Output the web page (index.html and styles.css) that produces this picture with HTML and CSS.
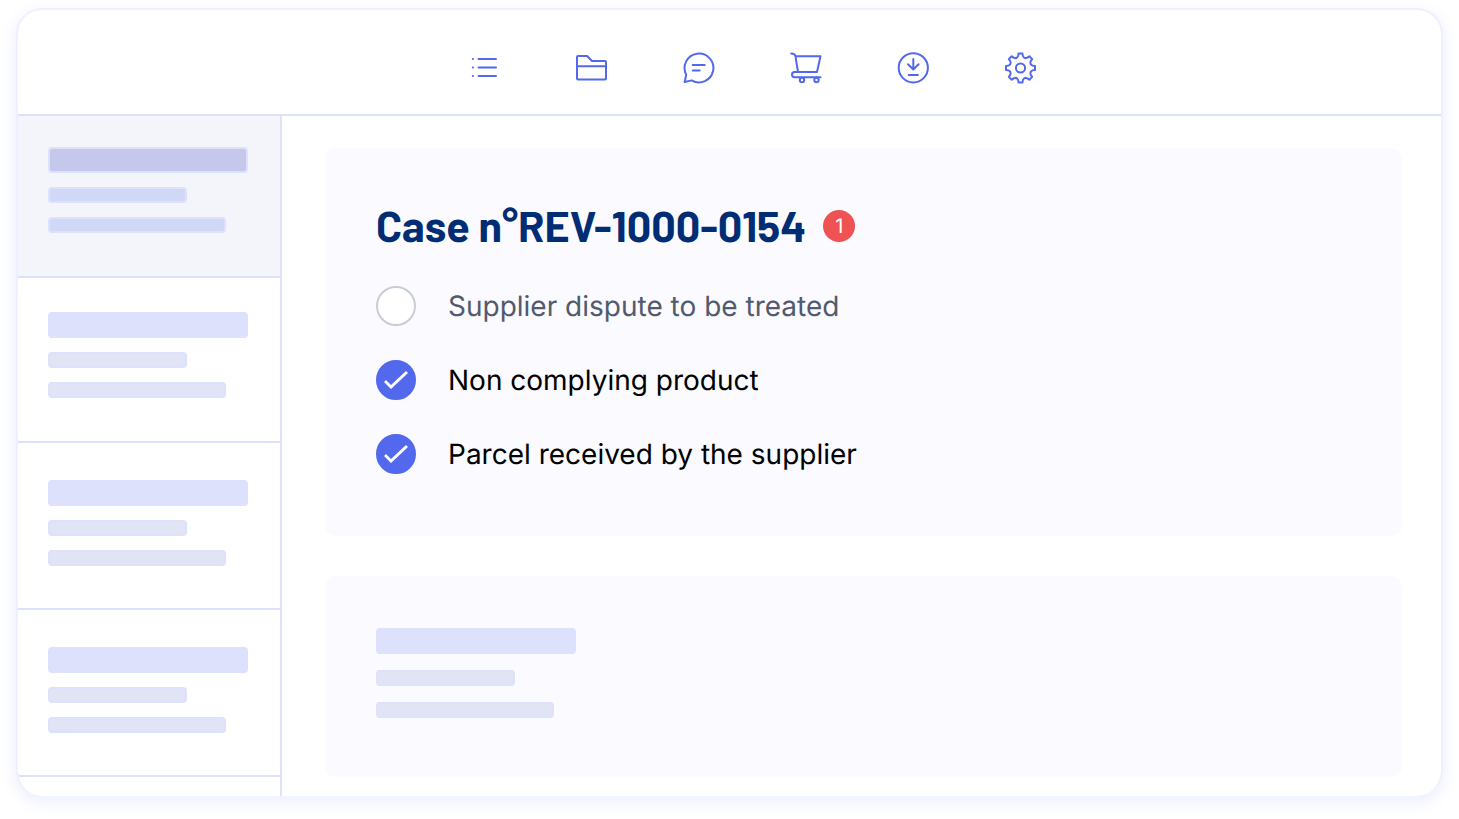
FILE: index.html
```html
<!DOCTYPE html>
<html lang="en">
<head>
    <meta charset="UTF-8">
    <title>Case n°REV-1000-0154</title>
    <link rel="stylesheet" href="styles.css">
</head>
<body>
    <div class="window">
        <nav class="toolbar">
            <button type="button" aria-label="List">
                <svg viewBox="0 0 32 32"><path d="M9.500 7H27M9.500 15.500H27M9.500 24H27M3.800 7h.2M3.800 15.500h.2M3.800 24h.2"/></svg>
            </button>
            <button type="button" aria-label="Folder">
                <svg viewBox="0 0 32 32"><path d="M1 26.500V5q0-1 1-1h9l5 5H29q1 0 1 1v16.500q0 1-1 1H2q-1 0-1-1M1 14.300h29"/></svg>
            </button>
            <button type="button" aria-label="Messages">
                <svg viewBox="0 0 32 32"><path d="M3.200 22.600A14.400 14.400 0 1 1 8.700 28.400L1.700 30zM9.700 13h12M9.700 18.500h7"/></svg>
            </button>
            <button type="button" aria-label="Cart">
                <svg viewBox="0 0 32 32"><path d="M1.200 1.400q3.600-.2 4.300 2.900L8 20h19L30.500 4.300H5.500M8 20H4.600a2.600 2.600 0 0 0 0 5.200h25.900"/><circle cx="12" cy="28" r="2.200"/><circle cx="26.500" cy="28" r="2.200"/></svg>
            </button>
            <button type="button" aria-label="Download">
                <svg viewBox="0 0 32 32"><circle cx="16.300" cy="15.800" r="14.600"/><path d="M16.300 7v10.500M11 12.200l5.300 5.300 5.300-5.300M11.700 23h9.200"/></svg>
            </button>
            <button type="button" aria-label="Settings">
                <svg viewBox="-16.500 -16 32 32"><path d="M-3-11Q-2.200-11.500-2-14.500H2Q2.200-11.500 3-11Q4-9.700 5.660-9.900Q7-10 8.840-11.670L11.670-8.840Q10-7 9.900-5.660Q9.700-4 11-3Q11.500-2.200 14.500-2V2Q11.500 2.200 11 3Q9.700 4 9.900 5.660Q10 7 11.670 8.840L8.840 11.670Q7 10 5.660 9.900Q4 9.700 3 11Q2.200 11.500 2 14.500H-2Q-2.200 11.500-3 11Q-4 9.700-5.660 9.900Q-7 10-8.840 11.670L-11.670 8.840Q-10 7-9.900 5.660Q-9.700 4-11 3Q-11.500 2.200-14.500 2V-2Q-11.500-2.200-11-3Q-9.700-4-9.900-5.660Q-10-7-11.670-8.840L-8.840-11.670Q-7-10-5.660-9.900Q-4-9.700-3-11z"/><circle r="4.600"/></svg>
            </button>
        </nav>

        <div class="content">
            <aside class="sidebar">
                <div class="item active">
                    <div class="bar bar-title"></div>
                    <div class="bar bar-short"></div>
                    <div class="bar bar-long"></div>
                </div>
                <div class="item second">
                    <div class="bar bar-title"></div>
                    <div class="bar bar-short"></div>
                    <div class="bar bar-long"></div>
                </div>
                <div class="item">
                    <div class="bar bar-title"></div>
                    <div class="bar bar-short"></div>
                    <div class="bar bar-long"></div>
                </div>
                <div class="item">
                    <div class="bar bar-title"></div>
                    <div class="bar bar-short"></div>
                    <div class="bar bar-long"></div>
                </div>
            </aside>

            <main>
                <section class="panel case">
                    <div class="case-title">
                        <h1>Case n°REV-1000-0154</h1>
                        <span class="badge">1</span>
                    </div>
                    <div class="step">
                        <input type="checkbox" id="dispute">
                        <label for="dispute">Supplier dispute to be treated</label>
                    </div>
                    <div class="step">
                        <input type="checkbox" id="product" checked>
                        <label for="product">Non complying product</label>
                    </div>
                    <div class="step">
                        <input type="checkbox" id="parcel" checked>
                        <label for="parcel">Parcel received by the supplier</label>
                    </div>
                </section>

                <section class="panel placeholder">
                    <div class="bar bar-title"></div>
                    <div class="bar bar-short"></div>
                    <div class="bar bar-long"></div>
                </section>
            </main>
        </div>
    </div>
</body>
</html>
```

FILE: styles.css
```css
* {
    box-sizing: border-box;
}

body {
    margin: 0;
    padding: 8px 16px 23px;
    min-height: 100vh;
    display: flex;
    background-color: #fff;
    font-family: Inter, "Liberation Sans", sans-serif;
    text-rendering: geometricPrecision;
}

.window {
    flex: 1;
    display: flex;
    flex-direction: column;
    border: 2px solid #efefff;
    border-bottom: none;
    border-radius: 26px;
    background-color: #fff;
    box-shadow: 0 5px 16px rgba(82, 104, 237, 0.12);
    overflow: hidden;
}

/* Top bar with the icons */
.toolbar {
    display: flex;
    justify-content: center;
    gap: 75px;
    padding: 42px 0 30px 45px;
    border-bottom: 2px solid #dde1fb;
}

.toolbar button {
    width: 32px;
    height: 32px;
    padding: 0;
    border: none;
    background: none;
    cursor: pointer;
}

.toolbar svg {
    display: block;
    width: 32px;
    height: 32px;
    fill: none;
    stroke: #5268ed;
    stroke-width: 2;
    stroke-linecap: round;
    stroke-linejoin: round;
}

.content {
    flex: 1;
    display: flex;
}

/* List of cases */
.sidebar {
    width: 264px;
    flex-shrink: 0;
    border-right: 2px solid #dde1fb;
}

.item {
    display: flex;
    flex-direction: column;
    gap: 14px;
    padding: 37px 30px 42px;
    border-bottom: 2px solid #dde1fb;
}

.item.active {
    padding: 31px 30px 43px;
    background-color: #f4f5fb;
}

.item.second {
    padding: 34px 30px 43px;
}

.bar {
    height: 16px;
    border: 2px solid #dde1fb;
    border-radius: 4px;
    background-color: #e0e4f5;
}

.bar-title {
    width: 200px;
    height: 26px;
    background-color: #dde1fb;
}

.bar-short {
    width: 139px;
}

.bar-long {
    width: 178px;
}

.active .bar {
    background-color: #d1d7f7;
}

.active .bar-title {
    background-color: #c5c8ea;
}

/* Case detail */
main {
    flex: 1;
    display: flex;
    flex-direction: column;
    gap: 40px;
    padding: 32px 39px 19px 43px;
}

.panel {
    border-radius: 10px;
    background-color: #fbfaff;
}

.case {
    display: flex;
    flex-direction: column;
    gap: 34px;
    padding: 52px 51px 62px;
}

.case-title {
    display: flex;
    align-items: center;
    gap: 17px;
    height: 52px;
}

h1 {
    margin: 0;
    color: #002d74;
    font-family: Barlow, Roboto, sans-serif;
    font-size: 43px;
    font-weight: 700;
    line-height: 50px;
    padding-bottom: 2px;
}

.badge {
    width: 32px;
    height: 32px;
    border-radius: 50%;
    background-color: #ee5253;
    color: #fff;
    font-size: 20px;
    line-height: 32px;
    text-align: center;
}

.step {
    display: flex;
    align-items: center;
    gap: 32px;
}

.step input {
    appearance: none;
    width: 40px;
    height: 40px;
    margin: 0;
    border: 2px solid #c9cdd6;
    border-radius: 50%;
    background-color: #fff;
}

.step input:checked {
    display: grid;
    place-items: center;
    border-color: #5268ed;
    background-color: #5268ed;
}

/* Tick mark */
.step input:checked::before {
    content: "";
    width: 24px;
    height: 18px;
    background-color: #fff;
    clip-path: polygon(0 11px, 2px 9px, 7px 14px, 22px 0, 24px 2px, 7px 18px);
}

.step label {
    color: #525b6d;
    font-size: 28px;
    line-height: 40px;
}

.step input:checked + label {
    color: #000;
}

.placeholder {
    display: flex;
    flex-direction: column;
    gap: 16px;
    padding: 52px 51px 59px;
}
```
